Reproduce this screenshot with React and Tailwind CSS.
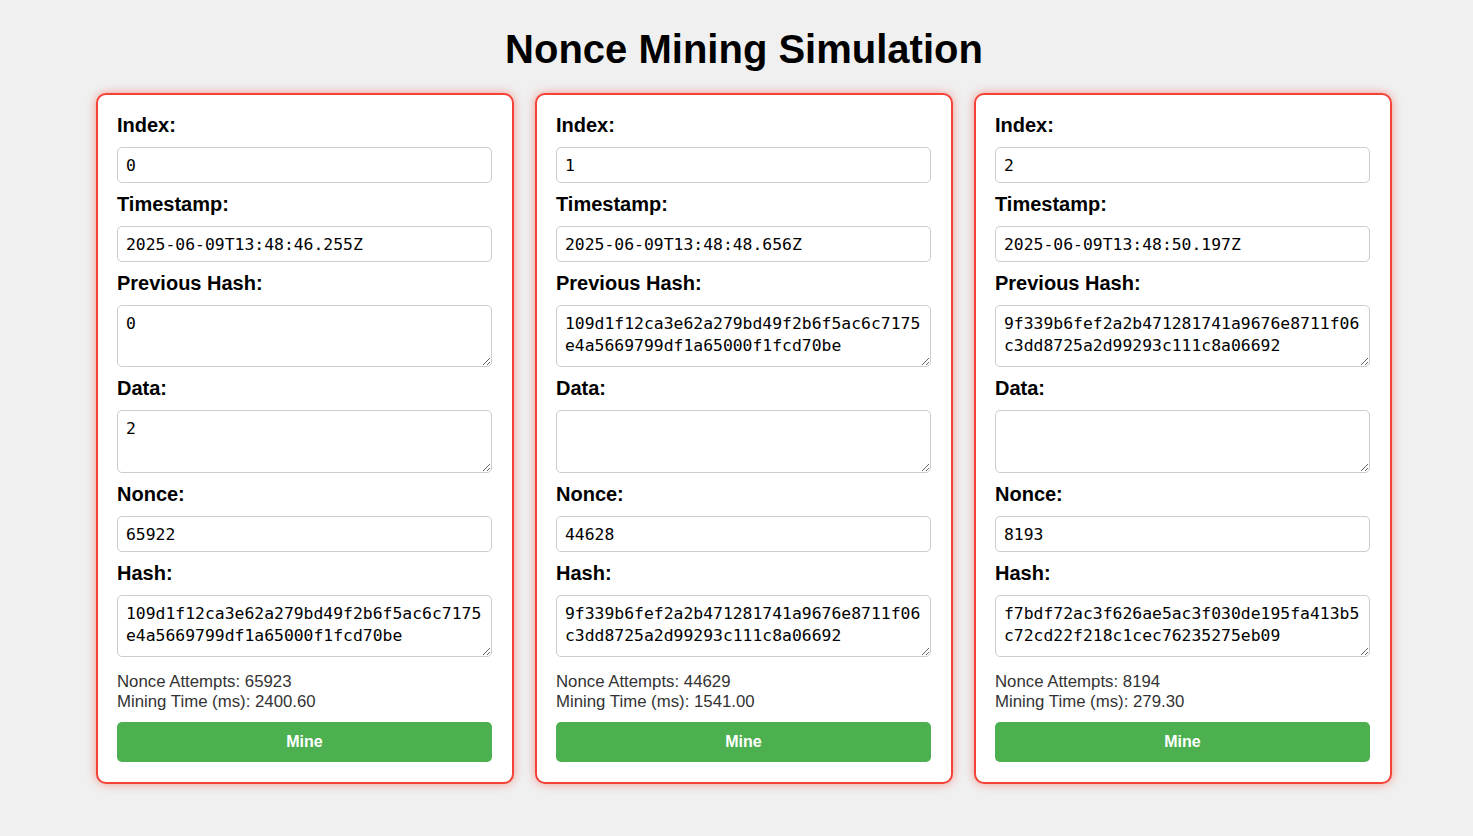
const BLOCKS = [
  {
    index: "0",
    timestamp: "2025-06-09T13:48:46.255Z",
    prevHash: "0",
    data: "2",
    nonce: "65922",
    hash: "109d1f12ca3e62a279bd49f2b6f5ac6c7175e4a5669799df1a65000f1fcd70be",
    attempts: 65923,
    time: "2400.60",
  },
  {
    index: "1",
    timestamp: "2025-06-09T13:48:48.656Z",
    prevHash: "109d1f12ca3e62a279bd49f2b6f5ac6c7175e4a5669799df1a65000f1fcd70be",
    data: "",
    nonce: "44628",
    hash: "9f339b6fef2a2b471281741a9676e8711f06c3dd8725a2d99293c111c8a06692",
    attempts: 44629,
    time: "1541.00",
  },
  {
    index: "2",
    timestamp: "2025-06-09T13:48:50.197Z",
    prevHash: "9f339b6fef2a2b471281741a9676e8711f06c3dd8725a2d99293c111c8a06692",
    data: "",
    nonce: "8193",
    hash: "f7bdf72ac3f626ae5ac3f030de195fa413b5c72cd22f218c1cec76235275eb09",
    attempts: 8194,
    time: "279.30",
  },
];

const mono = "font-['DejaVu_Sans_Mono',monospace] text-[16.4px] text-black";

const Label = ({ children, first }) => (
  <label className={`block text-[20px] font-bold leading-[23px] text-black ${first ? "mb-[10px]" : "my-[10px]"}`}>
    {children}
  </label>
);

const Field = ({ value }) => (
  <input
    readOnly
    value={value}
    className={`block w-full h-[36px] px-2 border border-[#ccc] rounded-[5px] bg-white outline-none ${mono}`}
  />
);

// data box sits one pixel taller in the original
const Area = ({ value, tall }) => (
  <textarea
    readOnly
    value={value}
    className={`block w-full ${tall ? "h-[63px]" : "h-[62px]"} px-2 py-[7px] border border-[#ccc] rounded-[5px] bg-white outline-none leading-[22px] break-all ${mono}`}
  />
);

const BlockCard = ({ b }) => (
  <div className="w-[418px] bg-white border-2 border-[#f44336] rounded-[10px] pl-[19px] pr-[20px] pt-[19px] pb-[20px] shadow-[0_0_10px_rgba(244,67,54,0.5)]">
    <Label first>Index:</Label>
    <Field value={b.index} />
    <Label>Timestamp:</Label>
    <Field value={b.timestamp} />
    <Label>Previous Hash:</Label>
    <Area value={b.prevHash} />
    <Label>Data:</Label>
    <Area value={b.data} tall />
    <Label>Nonce:</Label>
    <Field value={b.nonce} />
    <Label>Hash:</Label>
    <Area value={b.hash} />

    <div className="mt-[15px] text-[16.8px] leading-[20px] text-[#333]">
      <div>Nonce Attempts: {b.attempts}</div>
      <div>Mining Time (ms): {b.time}</div>
    </div>

    <button
      type="button"
      className="mt-[10px] w-full h-[40px] rounded-[5px] bg-[#4caf50] text-white text-[16px] font-bold"
    >
      Mine
    </button>
  </div>
);

export default function App() {
  return (
    <div className="min-h-screen bg-[#f0f0f0] pl-[15px] pt-[26px] pb-10 font-['Liberation_Sans',Arial,sans-serif]">
      <h1 className="text-center text-[40px] font-bold leading-[46px] text-black">Nonce Mining Simulation</h1>
      <div className="mt-[21px] flex justify-center gap-[21px]">
        {BLOCKS.map((b) => (
          <BlockCard key={b.index} b={b} />
        ))}
      </div>
    </div>
  );
}
